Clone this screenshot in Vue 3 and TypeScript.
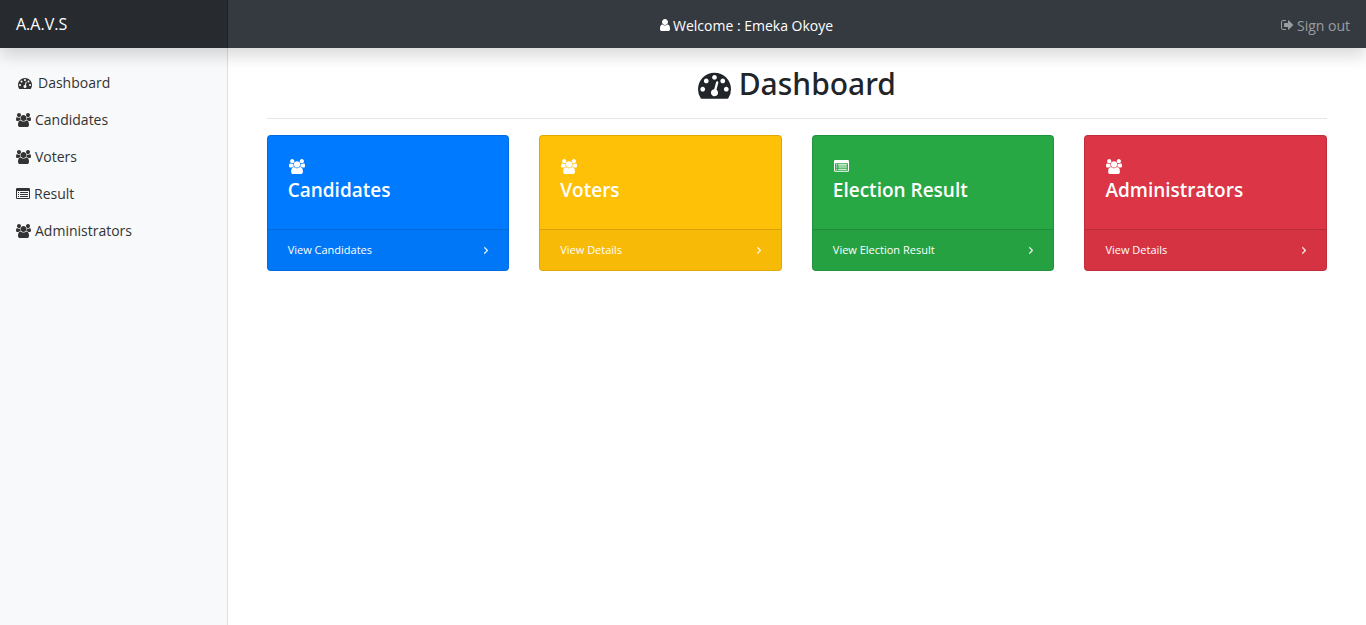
<script setup lang="ts">
type IconName = 'users' | 'dashboard' | 'user' | 'signOut' | 'list' | 'angle'

interface Icon {
  box: string
  path: string
}

const icons: Record<IconName, Icon> = {
  users: {
    box: '-64 0 1920 1792',
    path: 'M529 896q-162 5-265 128h-134q-82 0-138-40.5t-56-118.5q0-353 124-353 6 0 43.5 21t97.5 42.5 119 21.5q67 0 133-23-5 37-5 66 0 139 81 256zm1071 637q0 120-73 189.5t-194 69.5h-874q-121 0-194-69.5t-73-189.5q0-53 3.5-103.5t14-109 26.5-108.5 43-97.5 62-81 85.5-53.5 111.5-20q10 0 43 21.5t73 48 107 48 135 21.5 135-21.5 107-48 73-48 43-21.5q61 0 111.5 20t85.5 53.5 62 81 43 97.5 26.5 108.5 14 109 3.5 103.5zm-1024-1277q0 106-75 181t-181 75-181-75-75-181 75-181 181-75 181 75 75 181zm704 384q0 159-112.5 271.5t-271.5 112.5-271.5-112.5-112.5-271.5 112.5-271.5 271.5-112.5 271.5 112.5 112.5 271.5zm576 225q0 78-56 118.5t-138 40.5h-134q-103-123-265-128 81-117 81-256 0-29-5-66 66 23 133 23 59 0 119-21.5t97.5-42.5 43.5-21q124 0 124 353zm-128-609q0 106-75 181t-181 75-181-75-75-181 75-181 181-75 181 75 75 181z',
  },
  dashboard: {
    box: '0 0 1792 1792',
    path: 'M384 1152q0-53-37.5-90.5t-90.5-37.5-90.5 37.5-37.5 90.5 37.5 90.5 90.5 37.5 90.5-37.5 37.5-90.5zm192-448q0-53-37.5-90.5t-90.5-37.5-90.5 37.5-37.5 90.5 37.5 90.5 90.5 37.5 90.5-37.5 37.5-90.5zm428 481l101-382q6-26-7.5-48.5t-38.5-29.5-48 6.5-30 39.5l-101 382q-60 5-107 43.5t-63 98.5q-20 77 20 146t117 89 146-20 89-117q16-60-6-117t-72-91zm660-33q0-53-37.5-90.5t-90.5-37.5-90.5 37.5-37.5 90.5 37.5 90.5 90.5 37.5 90.5-37.5 37.5-90.5zm-640-640q0-53-37.5-90.5t-90.5-37.5-90.5 37.5-37.5 90.5 37.5 90.5 90.5 37.5 90.5-37.5 37.5-90.5zm448 192q0-53-37.5-90.5t-90.5-37.5-90.5 37.5-37.5 90.5 37.5 90.5 90.5 37.5 90.5-37.5 37.5-90.5zm320 448q0 261-141 483-19 29-54 29h-1402q-35 0-54-29-141-221-141-483 0-182 71-348t191-286 286-191 348-71 348 71 286 191 191 286 71 348z',
  },
  user: {
    box: '256 0 1280 1792',
    path: 'M1536 1399q0 109-62.5 187t-150.5 78h-854q-88 0-150.5-78t-62.5-187q0-85 8.5-160.5t31.5-152 58.5-131 94-89 134.5-34.5q131 128 313 128t313-128q76 0 134.5 34.5t94 89 58.5 131 31.5 152 8.5 160.5zm-256-887q0 159-112.5 271.5t-271.5 112.5-271.5-112.5-112.5-271.5 112.5-271.5 271.5-112.5 271.5 112.5 112.5 271.5z',
  },
  signOut: {
    box: '64 0 1600 1792',
    path: 'M704 1440q0 4 1 20t.5 26.5-3 23.5-10 19.5-20.5 6.5h-320q-119 0-203.5-84.5t-84.5-203.5v-704q0-119 84.5-203.5t203.5-84.5h320q13 0 22.5 9.5t9.5 22.5q0 4 1 20t.5 26.5-3 23.5-10 19.5-20.5 6.5h-320q-66 0-113 47t-47 113v704q0 66 47 113t113 47h312l11.5 1 11.5 3 8 5.5 7 9 2 13.5zm928-544q0 26-19 45l-544 544q-19 19-45 19t-45-19-19-45v-288h-448q-26 0-45-19t-19-45v-384q0-26 19-45t45-19h448v-288q0-26 19-45t45-19 45 19l544 544q19 19 19 45z',
  },
  list: {
    box: '0 0 1792 1792',
    path: 'M160 128h1472q160 0 160 160v1088q0 160-160 160H160Q0 1536 0 1376V288Q0 128 160 128zM160 512q-32 0-32 32v832q0 32 32 32h1472q32 0 32-32V544q0-32-32-32zM256 640h128v128H256zM512 640h1024v128H512zM256 896h128v128H256zM512 896h1024v128H512zM256 1152h128v128H256zM512 1152h1024v128H512z',
  },
  angle: {
    box: '576 0 640 1792',
    path: 'M1171 960q0 13-10 23l-466 466q-10 10-23 10t-23-10l-50-50q-10-10-10-23t10-23l393-393-393-393q-10-10-10-23t10-23l50-50q10-10 23-10t23 10l466 466q10 10 10 23z',
  },
}

const navItems: { label: string; icon: IconName }[] = [
  { label: 'Dashboard', icon: 'dashboard' },
  { label: 'Candidates', icon: 'users' },
  { label: 'Voters', icon: 'users' },
  { label: 'Result', icon: 'list' },
  { label: 'Administrators', icon: 'users' },
]

const cards: { title: string; link: string; icon: IconName; tone: string }[] = [
  { title: 'Candidates', link: 'View Candidates', icon: 'users', tone: 'primary' },
  { title: 'Voters', link: 'View Details', icon: 'users', tone: 'warning' },
  { title: 'Election Result', link: 'View Election Result', icon: 'list', tone: 'success' },
  { title: 'Administrators', link: 'View Details', icon: 'users', tone: 'danger' },
]
</script>

<template>
  <div class="page">
    <header class="topbar">
      <a class="brand" href="#">A.A.V.S</a>
      <div class="welcome">
        <svg class="icon" :viewBox="icons.user.box" aria-hidden="true"><path :d="icons.user.path" /></svg>
        <span>Welcome : Emeka Okoye</span>
      </div>
      <a class="signout" href="#">
        <svg class="icon" :viewBox="icons.signOut.box" aria-hidden="true"><path :d="icons.signOut.path" /></svg>
        <span>Sign out</span>
      </a>
    </header>

    <div class="layout">
      <nav class="sidebar">
        <ul>
          <li v-for="item in navItems" :key="item.label">
            <a href="#" :class="['nav-link', { current: item.icon === 'dashboard' }]">
              <svg class="icon" :viewBox="icons[item.icon].box" fill-rule="evenodd" aria-hidden="true">
                <path :d="icons[item.icon].path" />
              </svg>
              <span>{{ item.label }}</span>
            </a>
          </li>
        </ul>
      </nav>

      <main class="content">
        <h1>
          <svg class="icon" :viewBox="icons.dashboard.box" aria-hidden="true"><path :d="icons.dashboard.path" /></svg>
          <span>Dashboard</span>
        </h1>
        <hr />
        <div class="cards">
          <section v-for="card in cards" :key="card.title" :class="['card', card.tone]">
            <div class="card-body">
              <svg class="icon" :viewBox="icons[card.icon].box" fill-rule="evenodd" aria-hidden="true">
                <path :d="icons[card.icon].path" />
              </svg>
              <h2>{{ card.title }}</h2>
            </div>
            <a class="card-footer" href="#">
              <span>{{ card.link }}</span>
              <svg class="icon" :viewBox="icons.angle.box" aria-hidden="true"><path :d="icons.angle.path" /></svg>
            </a>
          </section>
        </div>
      </main>
    </div>
  </div>
</template>

<style>
body {
  margin: 0;
  background: #fff;
}
</style>

<style scoped>
.page {
  display: flex;
  flex-direction: column;
  min-height: 100vh;
  font-family: 'Open Sans', 'Noto Sans', sans-serif;
  font-size: 14px;
  line-height: 21px;
  color: #212529;
}

a {
  color: inherit;
  text-decoration: none;
}

.icon {
  display: block;
  flex: none;
  height: 14px;
  fill: currentColor;
}

.topbar {
  position: relative;
  z-index: 1;
  display: flex;
  align-items: stretch;
  height: 48px;
  background: #343a40;
  color: #fff;
  box-shadow: 0 8px 16px rgba(0, 0, 0, 0.15);
}

.brand {
  box-sizing: border-box;
  width: 16.6667%;
  padding: 12px 16px;
  font-size: 16px;
  line-height: 24px;
  background: rgba(0, 0, 0, 0.25);
  box-shadow: inset -1px 0 0 rgba(0, 0, 0, 0.25);
}

.welcome,
.signout {
  display: flex;
  align-items: center;
  gap: 3px;
  padding-top: 2px;
}

.welcome {
  flex: 1;
  justify-content: center;
}

.signout {
  padding-left: 16px;
  padding-right: 16px;
  color: rgba(255, 255, 255, 0.5);
}

.layout {
  display: flex;
  flex: 1;
}

.sidebar {
  box-sizing: border-box;
  width: 16.6667%;
  padding-top: 16px;
  background: #f8f9fa;
  box-shadow: inset -1px 0 0 rgba(0, 0, 0, 0.1);
}

.sidebar ul {
  margin: 0;
  padding: 0;
  list-style: none;
}

.nav-link {
  display: flex;
  align-items: center;
  gap: 4px;
  padding: 8px 16px;
  color: #333;
}

.nav-link.current {
  gap: 6px;
  padding-left: 18px;
}

.content {
  flex: 1;
  min-width: 0;
  padding: 16px 39px;
}

h1 {
  display: flex;
  align-items: center;
  justify-content: center;
  gap: 8px;
  margin: 0 0 14px;
  font-family: 'Noto Sans', 'Open Sans', sans-serif;
  font-size: 30px;
  line-height: 40px;
  font-weight: 500;
}

h1 .icon {
  height: 33px;
}

hr {
  margin: 0 0 16px;
  border: 0;
  border-top: 1px solid rgba(0, 0, 0, 0.1);
}

.cards {
  display: grid;
  grid-template-columns: repeat(4, 1fr);
  gap: 30px;
}

.card {
  overflow: hidden;
  border: 1px solid rgba(0, 0, 0, 0.125);
  border-radius: 4px;
  color: #fff;
}

.primary {
  background: #007bff;
}

.warning {
  background: #ffc107;
}

.success {
  background: #28a745;
}

.danger {
  background: #dc3545;
}

.card-body {
  padding: 23px 20px;
}

.card-body .icon {
  height: 15px;
  margin-left: 1px;
}

h2 {
  margin: 4px 0;
  font-size: 19px;
  line-height: 24px;
  font-weight: 600;
}

.card-footer {
  display: flex;
  align-items: center;
  justify-content: space-between;
  padding: 12px 20px;
  border-top: 1px solid rgba(0, 0, 0, 0.125);
  background: rgba(0, 0, 0, 0.03);
  font-size: 11px;
  line-height: 16px;
}

.card-footer .icon {
  height: 12px;
  stroke: currentColor;
  stroke-width: 60;
}
</style>
